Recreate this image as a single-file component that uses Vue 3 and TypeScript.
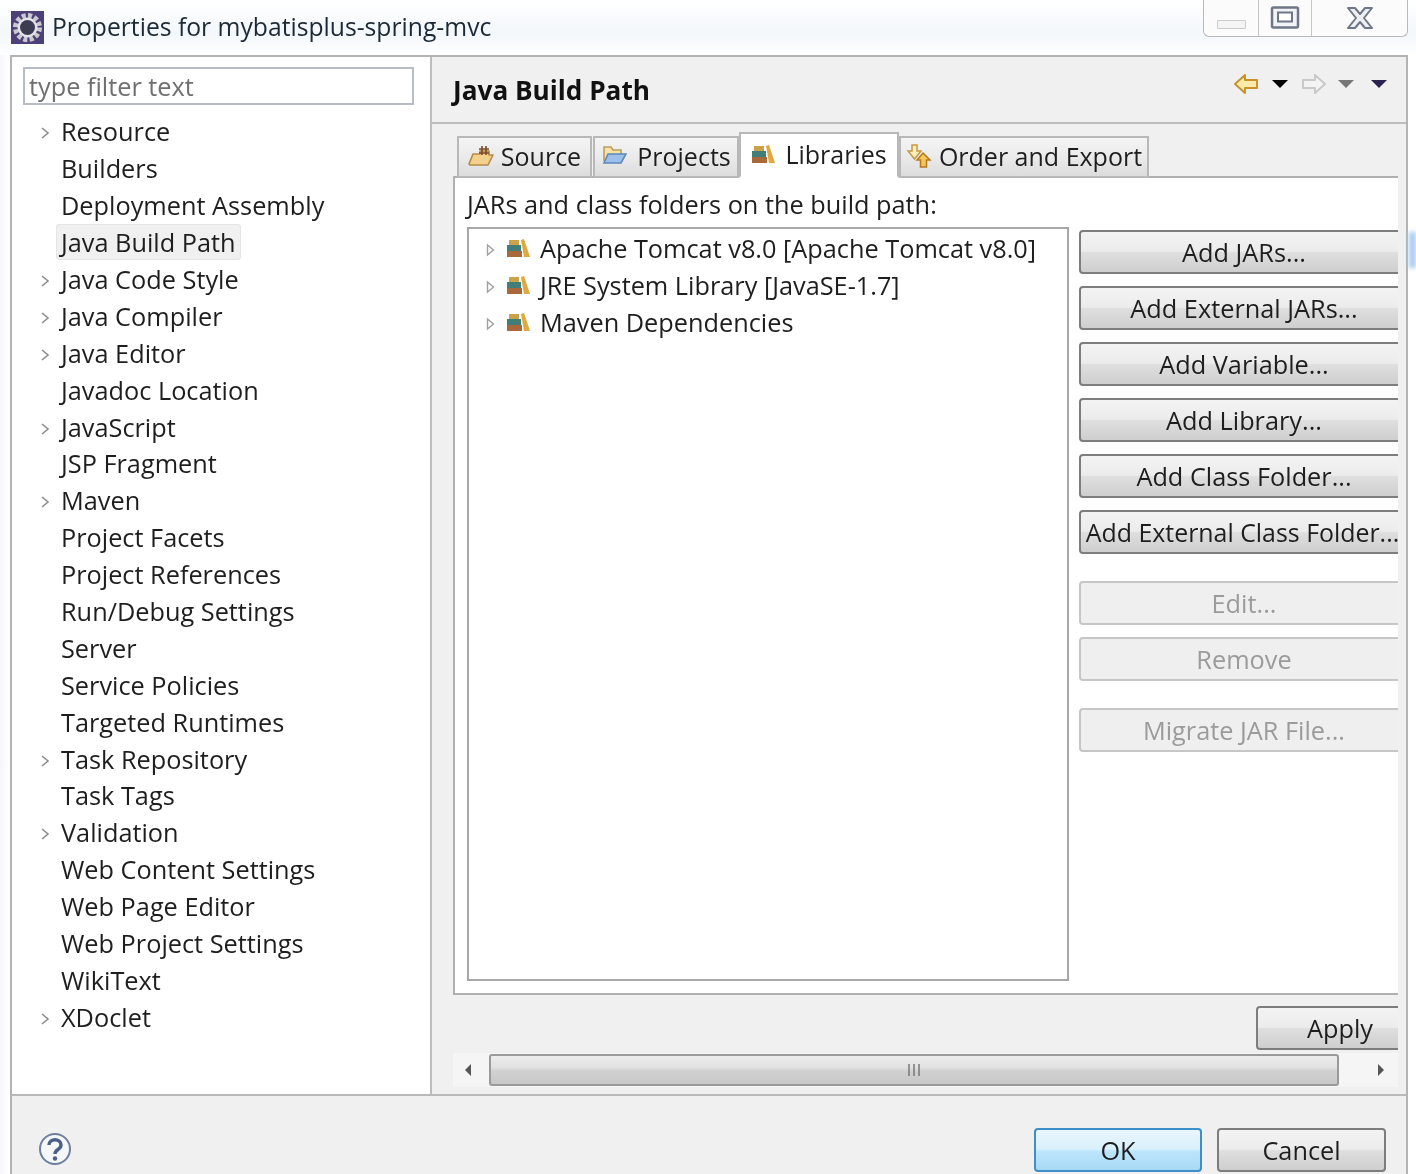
<script setup lang="ts">
interface NavItem { label: string; arrow?: boolean; selected?: boolean }
const nav: NavItem[] = [
  { label: 'Resource', arrow: true },
  { label: 'Builders' },
  { label: 'Deployment Assembly' },
  { label: 'Java Build Path', selected: true },
  { label: 'Java Code Style', arrow: true },
  { label: 'Java Compiler', arrow: true },
  { label: 'Java Editor', arrow: true },
  { label: 'Javadoc Location' },
  { label: 'JavaScript', arrow: true },
  { label: 'JSP Fragment' },
  { label: 'Maven', arrow: true },
  { label: 'Project Facets' },
  { label: 'Project References' },
  { label: 'Run/Debug Settings' },
  { label: 'Server' },
  { label: 'Service Policies' },
  { label: 'Targeted Runtimes' },
  { label: 'Task Repository', arrow: true },
  { label: 'Task Tags' },
  { label: 'Validation', arrow: true },
  { label: 'Web Content Settings' },
  { label: 'Web Page Editor' },
  { label: 'Web Project Settings' },
  { label: 'WikiText' },
  { label: 'XDoclet', arrow: true },
]
const libs = ['Apache Tomcat v8.0 [Apache Tomcat v8.0]', 'JRE System Library [JavaSE-1.7]', 'Maven Dependencies']
const addButtons = ['Add JARs...', 'Add External JARs...', 'Add Variable...', 'Add Library...', 'Add Class Folder...', 'Add External Class Folder...']
</script>

<template>
  <div class="window">
    <svg class="defs" width="0" height="0">
      <symbol id="books" viewBox="0 0 24 20">
        <rect x="1" y="13" width="15" height="6" fill="#a9683a" />
        <rect x="1" y="7" width="14" height="6" fill="#3f7f78" />
        <rect x="3" y="2" width="10" height="5" fill="#c9a24a" />
        <path d="M15 2 L18 1 L24 19 L18 19 Z" fill="#e0a83e" />
      </symbol>
    </svg>

    <header class="titlebar">
      <svg class="app-icon" viewBox="0 0 33 33">
        <rect width="33" height="33" fill="#4d3f78" />
        <circle cx="16.5" cy="16.5" r="12" fill="none" stroke="#c9c9cf" stroke-width="5" stroke-dasharray="4 2.3" />
        <circle cx="16.5" cy="16.5" r="10" fill="#e4e4e8" />
        <circle cx="16.5" cy="16.5" r="7.5" fill="#3d3d52" />
      </svg>
      <span class="title">Properties for mybatisplus-spring-mvc</span>
      <div class="win-controls">
        <div class="wc wc-min"><span class="min-bar"></span></div>
        <div class="wc wc-max">
          <svg width="30" height="24" viewBox="0 0 30 24"><rect x="2" y="1.5" width="26" height="20" rx="1.5" fill="#f2f3f6" stroke="#6f7787" stroke-width="2.5" /><rect x="8" y="6.5" width="14" height="9" fill="#fff" stroke="#6f7787" stroke-width="2" /></svg>
        </div>
        <div class="wc wc-close">
          <svg width="28" height="24" viewBox="0 0 28 24"><path d="M2 2 H9 L14 8 L19 2 H26 L18 12 L26 22 H19 L14 16 L9 22 H2 L10 12 Z" fill="#eef0f3" stroke="#6f7787" stroke-width="2" stroke-linejoin="round" /></svg>
        </div>
      </div>
    </header>

    <div class="dialog">
      <div class="main">
        <aside class="sidebar">
          <div class="filter">type filter text</div>
          <ul class="nav">
            <li v-for="item in nav" :key="item.label" class="nav-row">
              <svg v-if="item.arrow" class="chev" width="10" height="14" viewBox="0 0 10 14"><path d="M2 2 L8 7 L2 12" fill="none" stroke="#8c8c8c" stroke-width="1.6" /></svg>
              <span v-else class="chev"></span>
              <span class="nav-label" :class="{ selected: item.selected }">{{ item.label }}</span>
            </li>
          </ul>
        </aside>

        <section class="content">
          <div class="content-head">
            <h1>Java Build Path</h1>
            <div class="head-tools">
              <svg width="26" height="22" viewBox="0 0 26 22"><path d="M2 11 L12 2 V7 H24 V15 H12 V20 Z" fill="#fde9a8" stroke="#c8922f" stroke-width="2" stroke-linejoin="round" /></svg>
              <i class="tri tri-black"></i>
              <svg width="26" height="22" viewBox="0 0 26 22"><path d="M24 11 L14 2 V7 H2 V15 H14 V20 Z" fill="#f4f4f4" stroke="#c9c9c9" stroke-width="2" stroke-linejoin="round" /></svg>
              <i class="tri tri-grey"></i>
              <i class="tri tri-dark"></i>
            </div>
          </div>

          <div class="body">
            <div class="tabs">
              <div class="tab tab-source">
                <svg width="26" height="22" viewBox="0 0 26 22"><path d="M1 19 L5 9 H12 V6 H21 V10 H25 L20 20 H2 Z" fill="#f3d08b" stroke="#b58a45" stroke-width="1.6" stroke-linejoin="round" /><path d="M11 4 H21 M11 8 H21 M14 1 V10 M18 1 V10" stroke="#7a4a2a" stroke-width="1.6" /></svg>
                Source
              </div>
              <div class="tab tab-projects">
                <svg class="lift" width="26" height="22" viewBox="0 0 26 22"><path d="M3 17 V3 H10 L12 6 H20 V10" fill="#f5e3a8" stroke="#b9a05a" stroke-width="1.6" /><path d="M3 19 L7 10 H25 L20 19 Z" fill="#9cc0ea" stroke="#5c86bd" stroke-width="1.6" /></svg>
                Projects
              </div>
              <div class="tab tab-libs active">
                <svg width="24" height="20"><use href="#books" /></svg>
                Libraries
              </div>
              <div class="tab tab-order">
                <svg width="26" height="24" viewBox="0 0 26 24"><path d="M6 1 H11 V7 H15 L8.5 15 L2 7 H6 Z" fill="#fbeebb" stroke="#c49a45" stroke-width="1.5" /><path d="M17 9 L24 16 H20.5 V23 H14.5 V16 H11 Z" fill="#f5c65a" stroke="#b5791f" stroke-width="1.5" /></svg>
                Order and Export
              </div>
            </div>

            <div class="panel">
              <p class="panel-label">JARs and class folders on the build path:</p>
              <div class="panel-row">
                <div class="tree">
                  <div v-for="lib in libs" :key="lib" class="tree-row">
                    <svg class="tree-arrow" width="9" height="14" viewBox="0 0 9 14"><path d="M1.5 2 L7.5 7 L1.5 12 Z" fill="#fff" stroke="#a0a0a0" stroke-width="1.4" /></svg>
                    <svg class="tree-icon" width="24" height="20"><use href="#books" /></svg>
                    <span>{{ lib }}</span>
                  </div>
                </div>
                <div class="buttons">
                  <button v-for="b in addButtons" :key="b" class="btn wide">{{ b }}</button>
                  <button class="btn wide disabled gap-a">Edit...</button>
                  <button class="btn wide disabled">Remove</button>
                  <button class="btn wide disabled gap-b">Migrate JAR File...</button>
                </div>
              </div>
            </div>

            <div class="apply-row">
              <button class="btn apply">Apply</button>
            </div>

            <div class="scrollbar">
              <svg width="10" height="14" viewBox="0 0 10 14"><path d="M8 1 V13 L2 7 Z" fill="#555" /></svg>
              <div class="thumb">
                <svg width="16" height="12" viewBox="0 0 16 12"><path d="M3 0 V12 M8 0 V12 M13 0 V12" stroke="#777" stroke-width="1.5" /></svg>
              </div>
              <svg width="10" height="14" viewBox="0 0 10 14"><path d="M2 1 V13 L8 7 Z" fill="#555" /></svg>
            </div>
          </div>
        </section>
      </div>

      <footer class="footer">
        <svg class="help" width="34" height="34" viewBox="0 0 34 34">
          <circle cx="17" cy="17" r="15" fill="#f6f7f9" stroke="#6d7f9c" stroke-width="2" />
          <path d="M11 13 C11 6 23 6 23 13 C23 18 17 17 17 22" fill="none" stroke="#4a6088" stroke-width="3.4" />
          <circle cx="17" cy="26.5" r="2.2" fill="#4a6088" />
        </svg>
        <button class="btn ok">OK</button>
        <button class="btn cancel">Cancel</button>
      </footer>
    </div>
    <div class="streak"></div>
  </div>
</template>

<style scoped>
.window {
  position: relative;
  width: 1416px;
  height: 1174px;
  overflow: hidden;
  display: flex;
  flex-direction: column;
  box-sizing: border-box;
  padding: 0 8px 0 10px;
  background: linear-gradient(90deg, #f6f7fc 0, #ffffff 10px, #ffffff 100%);
  font-family: "Open Sans", "Noto Sans", sans-serif;
  font-size: 25.3px;
  color: #1e1e1e;
  filter: blur(0.45px);
}
.defs { position: absolute; }
.titlebar {
  height: 55px;
  flex: none;
  display: flex;
  align-items: flex-start;
  background: linear-gradient(180deg, #ffffff 0, #f3f7fb 60%, #ffffff 100%);
  margin: 0 -8px 0 -10px;
  padding: 0 8px 0 11px;
}
.app-icon { width: 33px; height: 33px; margin-top: 11px; flex: none; }
.title { margin: 9px 0 0 8px; line-height: 36px; color: #1d2a36; font-size: 24.7px; }
.win-controls {
  margin-left: auto;
  display: flex;
  height: 37px;
  box-sizing: border-box;
  border: 1px solid #b7b9bd;
  border-top: none;
  border-radius: 0 0 6px 6px;
  background: #fbfbfb;
}
.wc { display: flex; align-items: center; justify-content: center; }
.wc-min { width: 54px; border-right: 1px solid #c4c6ca; }
.wc-max { width: 52px; border-right: 1px solid #c4c6ca; }
.wc-close { width: 95px; }
.min-bar { width: 27px; height: 7px; margin-top: 13px; border: 1px solid #c9cbcf; border-radius: 1px; background: #f4f4f4; }

.dialog {
  flex: 1;
  display: flex;
  flex-direction: column;
  border: 2px solid #b4b4b4;
  border-bottom: none;
  background: #f0f0f0;
  min-height: 0;
}
.main { height: 1039px; flex: none; display: flex; border-bottom: 2px solid #b9b9b9; box-sizing: border-box; }
.sidebar {
  width: 420px;
  flex: none;
  box-sizing: border-box;
  background: #fff;
  border-right: 2px solid #bdbdbd;
  padding: 10px 0 0 11px;
}
.filter {
  width: 391px;
  height: 38px;
  box-sizing: border-box;
  border: 2px solid #b8bcc4;
  padding-left: 4px;
  line-height: 34px;
  color: #6f6f6f;
}
.nav { list-style: none; margin: 8px 0 0; padding: 0; }
.nav-row { height: 36.9px; display: flex; align-items: center; }
.chev { width: 10px; margin: 4px 0 0 17px; flex: none; }
.nav-label { margin-left: 6px; padding: 0 4px; line-height: 34px; height: 34px; border-radius: 3px; border: 1px solid transparent; }
.nav-label.selected { background: #f0f0f0; border-color: #e4e4e4; }

.content { flex: 1; min-width: 0; display: flex; flex-direction: column; }
.content-head {
  height: 67px;
  flex: none;
  box-sizing: border-box;
  border-bottom: 2px solid #bdbdbd;
  display: flex;
  align-items: center;
  padding: 0 19px 0 21px;
}
.content-head h1 { margin: 0; font-size: 26.2px; font-weight: 700; color: #111; }
.head-tools { margin-left: auto; display: flex; align-items: center; margin-top: -12px; }
.tri { display: block; width: 0; height: 0; border-left: 8px solid transparent; border-right: 8px solid transparent; border-top: 8px solid #000; }
.tri-grey { border-top-color: #777; margin: 0 8px 0 11px; }
.tri-black { margin: 0 13px; }
.tri-dark { border-top-color: #2c2350; margin-left: 9px; }

.body { flex: 1; min-height: 0; padding: 8px 8px 0 21px; display: flex; flex-direction: column; }
.tabs { display: flex; align-items: flex-end; height: 46px; flex: none; margin-bottom: -2px; position: relative; z-index: 1; padding-left: 4px; font-size: 25px; }
.tab {
  height: 42px;
  box-sizing: border-box;
  display: flex;
  align-items: center;
  justify-content: center;
  gap: 7px;
  border: 2px solid #b8b8b8;
  padding-bottom: 2px;
  background: linear-gradient(180deg, #f4f4f4 0, #ececec 45%, #dcdcdc 100%);
  margin-right: 1px;
}
.tab-source { width: 135px; }
.tab-projects { width: 146px; margin-right: 0; gap: 10px; }
.tab-libs { width: 160px; margin-right: 0; gap: 10px; }
.tab-order { width: 250px; }
.tab.active { height: 46px; background: #fff; border-bottom-color: #fff; padding-bottom: 3px; }
.lift { margin-top: -3px; }
.panel {
  height: 819px;
  flex: none;
  box-sizing: border-box;
  background: #fff;
  border: 2px solid #b0b0b0;
  border-right: none;
  padding: 0 0 0 12px;
  overflow: hidden;
}
.panel-label { margin: 0; height: 49px; line-height: 52px; }
.panel-row { display: flex; gap: 10px; }
.tree { width: 602px; height: 754px; flex: none; box-sizing: border-box; border: 2px solid #a8a8a8; }
.tree-row { height: 37px; display: flex; align-items: center; }
.tree-arrow { margin: 4px 0 0 17px; flex: none; }
.tree-icon { margin-left: 11px; margin-right: 10px; flex: none; }
.buttons { flex: 1; min-width: 0; overflow: hidden; display: flex; flex-direction: column; gap: 12px; padding-top: 3px; }
.btn {
  font: inherit;
  color: #1e1e1e;
  height: 44px;
  flex: none;
  padding: 0;
  box-sizing: border-box;
  white-space: nowrap;
  border: 2px solid #7d7d7d;
  border-radius: 4px;
  background: linear-gradient(180deg, #f3f3f3 0, #ececec 48%, #dedede 52%, #cfcfcf 100%);
}
.btn.wide { width: 330px; }
.btn.wide:nth-child(6) { font-size: 24.9px; padding-right: 3px; }
.btn.disabled { color: #9b9b9b; background: #efefef; border-color: #c6c6c6; }
.gap-a { margin-top: 15px; }
.gap-b { margin-top: 15px; }
.apply-row { height: 58px; flex: none; overflow: hidden; padding-top: 11px; box-sizing: border-box; display: flex; justify-content: flex-start; padding-left: 803px; }
.btn.apply { width: 168px; }
.scrollbar {
  height: 34px;
  flex: none;
  background: #f5f5f5;
  display: flex;
  align-items: center;
  padding: 0 12px 0 10px;
  box-sizing: border-box;
  gap: 16px;
}
.thumb {
  flex: 1;
  height: 32px;
  margin-right: 21px;
  box-sizing: border-box;
  border: 2px solid #9a9a9a;
  border-radius: 3px;
  display: flex;
  align-items: center;
  justify-content: center;
  background: linear-gradient(180deg, #ececec 0, #e2e2e2 40%, #d0d0d0 55%, #c8c8c8 100%);
}
.footer { flex: 1; min-height: 0; display: flex; align-items: flex-start; position: relative; padding: 32px 20px 0 26px; }
.help { margin-top: 4px; }
.btn.ok {
  margin-left: auto;
  width: 168px;
  border-color: #3c8fc8;
  background: linear-gradient(180deg, #eaf6fd 0, #d9f0fc 48%, #bee6fd 52%, #a7d9f5 100%);
}
.btn.cancel { width: 169px; margin-left: 15px; }
.streak {
  position: absolute;
  right: 0;
  top: 232px;
  width: 7px;
  height: 36px;
  background: #a8cdf2;
  filter: blur(2px);
}
</style>
